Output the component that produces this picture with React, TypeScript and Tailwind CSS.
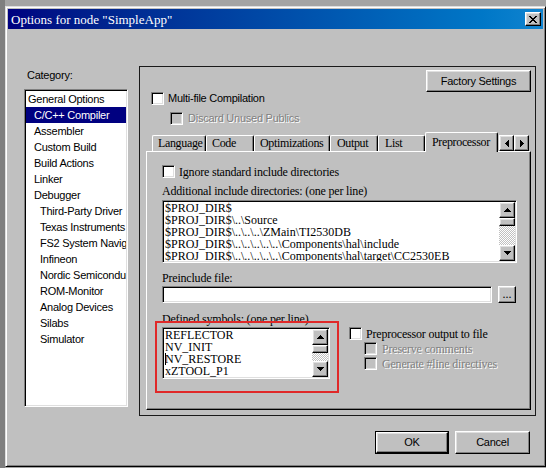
import React from "react";

const sansFont = "font-['Liberation_Sans',Arial,sans-serif] text-[11px] tracking-[-0.25px]";
const serifFont = "font-['Liberation_Serif','Times_New_Roman',serif] text-[12px]";
const sans = `${sansFont} text-black`;
const serif = `${serifFont} text-black`;
const raised =
  "border border-t-white border-l-white border-r-black border-b-black bg-[#c0c0c0] shadow-[inset_-1px_-1px_#808080,inset_1px_1px_#dfdfdf]";
const sunken =
  "border border-t-[#808080] border-l-[#808080] border-r-white border-b-white shadow-[inset_1px_1px_#000,inset_-1px_-1px_#dfdfdf]";
const grayed = "text-[#808080] [text-shadow:1px_1px_0_#fff]";
const trough = "bg-[image:repeating-conic-gradient(#fff_0_25%,#c0c0c0_0_50%)] bg-[length:2px_2px]";

const UP = "M3 0h1v1H3zM2 1h3v1H2zM1 2h5v1H1zM0 3h7v1H0z";
const DOWN = "M0 0h7v1H0zM1 1h5v1H1zM2 2h3v1H2zM3 3h1v1H3z";
const LEFT = "M0 3h1v1H0zM1 2h1v3H1zM2 1h1v5H2zM3 0h1v7H3z";
const RIGHT = "M0 0h1v7H0zM1 1h1v5H1zM2 2h1v3H2zM3 3h1v1H3z";
const CLOSE =
  "M0 0h2v1H0zM6 0h2v1H6zM1 1h2v1H1zM5 1h2v1H5zM2 2h4v1H2zM3 3h2v1H3zM2 4h4v1H2zM1 5h2v1H1zM5 5h2v1H5zM0 6h2v1H0zM6 6h2v1H6z";

function Px({ d, w, h }: { d: string; w: number; h: number }) {
  return (
    <svg width={w} height={h} viewBox={`0 0 ${w} ${h}`} shapeRendering="crispEdges">
      <path d={d} fill="#000" />
    </svg>
  );
}

function ArrowBtn({ d }: { d: string }) {
  return (
    <div className={`flex h-[16px] w-[16px] shrink-0 items-center justify-center ${raised}`}>
      <Px d={d} w={7} h={4} />
    </div>
  );
}

function VScroll() {
  return (
    <div className="flex h-full w-[16px] shrink-0 flex-col">
      <ArrowBtn d={UP} />
      <div className={`h-[8px] shrink-0 ${raised}`} />
      <div className={`flex-1 ${trough}`} />
      <ArrowBtn d={DOWN} />
    </div>
  );
}

function Check({ off }: { off?: boolean }) {
  return <span className={`block h-[13px] w-[13px] shrink-0 ${sunken} ${off ? "bg-[#c0c0c0]" : "bg-white"}`} />;
}

const cats: [string, number, boolean?][] = [
  ["General Options", 0],
  ["C/C++ Compiler", 1, true],
  ["Assembler", 1],
  ["Custom Build", 1],
  ["Build Actions", 1],
  ["Linker", 1],
  ["Debugger", 1],
  ["Third-Party Driver", 2],
  ["Texas Instruments", 2],
  ["FS2 System Navigator", 2],
  ["Infineon", 2],
  ["Nordic Semiconductor", 2],
  ["ROM-Monitor", 2],
  ["Analog Devices", 2],
  ["Silabs", 2],
  ["Simulator", 2],
];

const includes = [
  "$PROJ_DIR$",
  "$PROJ_DIR$\\..\\Source",
  "$PROJ_DIR$\\..\\..\\..\\ZMain\\TI2530DB",
  "$PROJ_DIR$\\..\\..\\..\\..\\..\\Components\\hal\\include",
  "$PROJ_DIR$\\..\\..\\..\\..\\..\\Components\\hal\\target\\CC2530EB",
];

const symbols = ["REFLECTOR", "NV_INIT", "NV_RESTORE", "xZTOOL_P1"];

const tabBase =
  "h-[16px] shrink-0 rounded-t-[2px] border-l border-t border-r border-l-white border-t-white border-r-black pl-[5px] leading-[15px] whitespace-nowrap shadow-[inset_-1px_0_#808080]";

export default function App() {
  return (
    <div className="h-[468px] w-[546px] overflow-hidden border-l-[5px] border-l-[#7f7f7f] bg-[#a4a4a4] pt-[6px]">
      <div className="flex h-[461px] w-[541px] flex-col border border-t-[#dfdfdf] border-l-[#dfdfdf] border-r-black border-b-black bg-[#c0c0c0] p-[2px] shadow-[inset_1px_1px_#fff,inset_-1px_-1px_#808080]">
        {/* title bar */}
        <div className="flex h-[20px] shrink-0 items-center justify-between bg-linear-to-r from-[#000080] to-[#1084d0] pl-[3px] pr-[2px]">
          <span className="font-['Liberation_Serif',serif] text-[13px] leading-none text-white">
            Options for node "SimpleApp"
          </span>
          <div className={`flex h-[14px] w-[16px] items-center justify-center ${raised}`}>
            <Px d={CLOSE} w={8} h={7} />
          </div>
        </div>

        <div className="flex flex-1 flex-col">
          <div className="flex items-start">
            {/* category list */}
            <div className="ml-[16px] flex w-[104px] flex-col pt-[39px]">
              <span className={`${sans} pl-[3px] leading-[14px]`}>Category:</span>
              <div className={`mt-[7px] h-[318px] overflow-hidden bg-white p-px ${sunken}`}>
                {cats.map(([name, lvl, sel]) => (
                  <div
                    key={name}
                    className={`h-[16px] overflow-hidden whitespace-nowrap leading-[16px] ${sansFont} ${
                      lvl === 0 ? "pl-[2px]" : lvl === 1 ? "pl-[8px]" : "pl-[14px]"
                    } ${sel ? "bg-[#000080] text-white" : "text-black"}`}
                  >
                    {name}
                  </div>
                ))}
              </div>
            </div>

            {/* options frame */}
            <div className="ml-[11px] mt-[37px] flex h-[350px] w-[397px] flex-col border border-[#1a1a1a]">
              <div className="flex justify-end pr-[4px] pt-[3px]">
                <div className={`flex h-[22px] w-[105px] items-center justify-center ${raised} ${sans}`}>
                  Factory Settings
                </div>
              </div>
              <div className="flex h-[13px] items-center gap-[4px] pl-[11px]">
                <Check />
                <span className={sans}>Multi-file Compilation</span>
              </div>
              <div className="mt-[7px] flex h-[13px] items-center gap-[5px] pl-[30px]">
                <Check off />
                <span className={`${sansFont} ${grayed}`}>Discard Unused Publics</span>
              </div>

              {/* tabs */}
              <div className={`mt-[7px] ml-[6px] flex h-[19px] items-end pl-[6px] tracking-[-0.35px] ${serif}`}>
                <div className={`${tabBase} w-[54px] pl-[2px]`}>Language</div>
                <div className={`${tabBase} w-[48px]`}>Code</div>
                <div className={`${tabBase} w-[76px]`}>Optimizations</div>
                <div className={`${tabBase} w-[48px] pl-[6px]`}>Output</div>
                <div className={`${tabBase} w-[47px] pl-[6px]`}>List</div>
                <div className="relative z-10 -mb-px h-[20px] w-[73px] shrink-0 rounded-t-[2px] border-l border-t border-r border-l-white border-t-white border-r-black bg-[#c0c0c0] pl-[6px] leading-[18px] shadow-[inset_-1px_0_#808080]">
                  Preprocessor
                </div>
                <div className={`ml-px flex h-[16px] w-[15px] items-center justify-center ${raised}`}>
                  <Px d={LEFT} w={4} h={7} />
                </div>
                <div className={`flex h-[16px] w-[15px] items-center justify-center ${raised}`}>
                  <Px d={RIGHT} w={4} h={7} />
                </div>
              </div>

              <div className="relative ml-[6px] flex h-[259px] w-[385px] flex-col border border-t-white border-l-white border-r-black border-b-black pl-[15px] shadow-[inset_-1px_-1px_#808080]">
                <div className="mt-[13px] flex h-[13px] items-center gap-[4px]">
                  <Check />
                  <span className={`${serif} tracking-[-0.2px]`}>Ignore standard include directories</span>
                </div>
                <span className={`${serif} mt-[6px] leading-[14px] tracking-[-0.2px]`}>
                  Additional include directories: (one per line)
                </span>
                <div className={`mt-[2px] flex h-[63px] w-[355px] bg-white p-px ${sunken}`}>
                  <div className={`flex-1 overflow-hidden pl-px leading-[12px] ${serif}`}>
                    {includes.map((l) => (
                      <div key={l} className="whitespace-nowrap">
                        {l}
                      </div>
                    ))}
                  </div>
                  <VScroll />
                </div>
                <span className={`${serif} mt-[8px] leading-[14px] tracking-[-0.2px]`}>Preinclude file:</span>
                <div className="mt-[1px] flex gap-[6px]">
                  <div className={`h-[17px] w-[330px] bg-white ${sunken}`} />
                  <div className={`flex h-[17px] w-[18px] items-end justify-center pb-[2px] text-[10px] leading-none ${raised} ${serif}`}>
                    ...
                  </div>
                </div>
                <span className={`${serif} mt-[9px] leading-[14px] tracking-[-0.2px]`}>
                  Defined symbols: (one per line)
                </span>
                <div className="mt-[1px] flex">
                  <div className={`flex h-[52px] w-[168px] bg-white p-px ${sunken}`}>
                    <div className={`flex-1 overflow-hidden pl-px leading-[12px] ${serif}`}>
                      {symbols.map((s) => (
                        <div key={s} className="whitespace-nowrap">
                          {s === "NV_RESTORE" ? <span className="-mr-px inline-block h-[12px] w-px bg-black align-top" /> : null}
                          {s}
                        </div>
                      ))}
                    </div>
                    <VScroll />
                  </div>
                  <div className="ml-[19px] flex flex-col gap-[2px]">
                    <div className="flex h-[13px] items-center gap-[4px]">
                      <Check />
                      <span className={`${serif} tracking-[-0.2px]`}>Preprocessor output to file</span>
                    </div>
                    <div className="flex h-[13px] items-center gap-[5px] pl-[15px]">
                      <Check off />
                      <span className={`${serifFont} tracking-[-0.2px] ${grayed}`}>Preserve comments</span>
                    </div>
                    <div className="flex h-[13px] items-center gap-[5px] pl-[15px]">
                      <Check off />
                      <span className={`${serifFont} tracking-[-0.2px] ${grayed}`}>Generate #line directives</span>
                    </div>
                  </div>
                </div>

                {/* red annotation box */}
                <div className="pointer-events-none absolute left-[8px] top-[169px] h-[72px] w-[184px] border-2 border-[#e02828]" />
              </div>
            </div>
          </div>

          <div className="mt-[15px] flex justify-end gap-[6px] pr-[13px]">
            <div className="h-[23px] w-[74px] border border-black">
              <div className={`flex h-full w-full items-center justify-center ${raised} ${sans}`}>OK</div>
            </div>
            <div className={`flex h-[23px] w-[75px] items-center justify-center ${raised} ${sans}`}>Cancel</div>
          </div>
        </div>
      </div>
    </div>
  );
}
